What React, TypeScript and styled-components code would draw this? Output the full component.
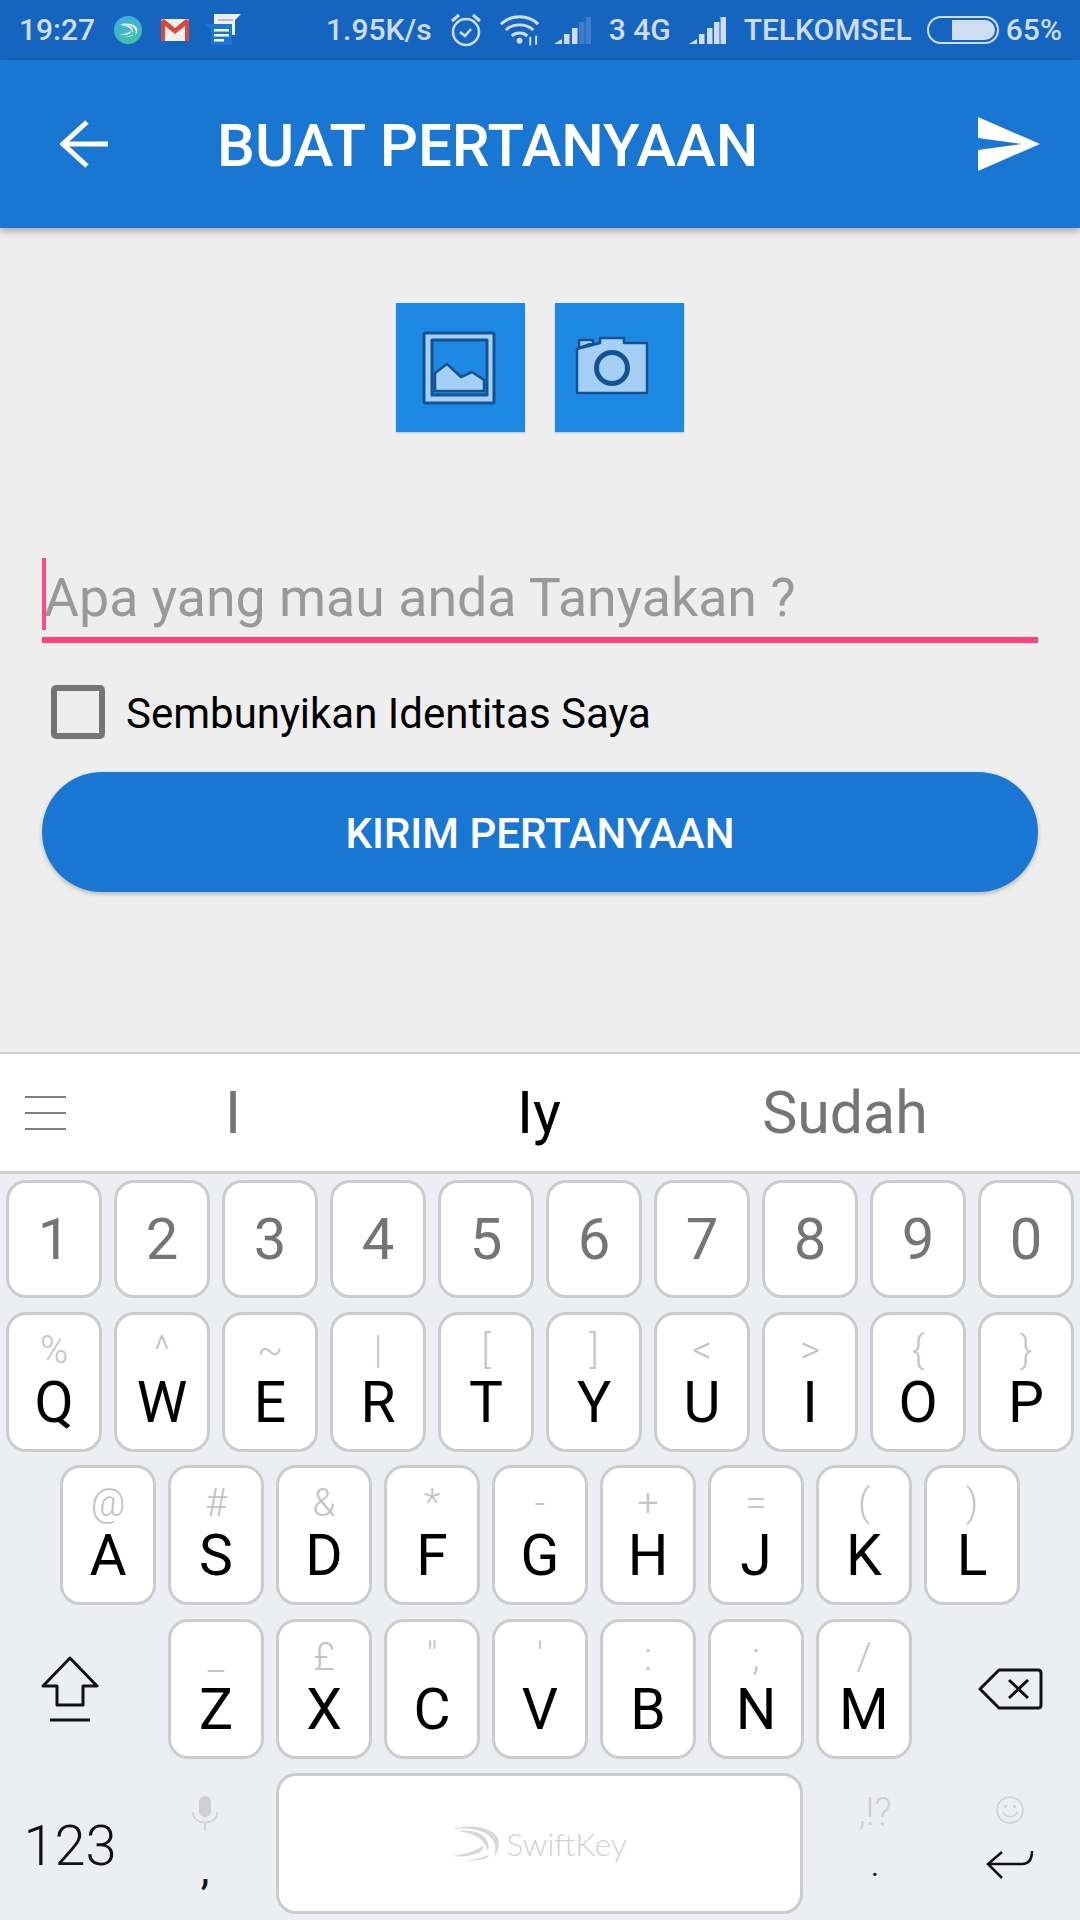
import React, { FC } from "react";
import styled, { createGlobalStyle } from "styled-components";

const Global = createGlobalStyle`
  html, body {
    margin: 0;
    padding: 0;
    background: #eeeeee;
  }
  * {
    box-sizing: border-box;
  }
`;

type KeyData = { main: string; sub?: string };

const digits = ["1", "2", "3", "4", "5", "6", "7", "8", "9", "0"];
const rowQ: KeyData[] = [
  { main: "Q", sub: "%" },
  { main: "W", sub: "^" },
  { main: "E", sub: "~" },
  { main: "R", sub: "|" },
  { main: "T", sub: "[" },
  { main: "Y", sub: "]" },
  { main: "U", sub: "<" },
  { main: "I", sub: ">" },
  { main: "O", sub: "{" },
  { main: "P", sub: "}" },
];
const rowA: KeyData[] = [
  { main: "A", sub: "@" },
  { main: "S", sub: "#" },
  { main: "D", sub: "&" },
  { main: "F", sub: "*" },
  { main: "G", sub: "-" },
  { main: "H", sub: "+" },
  { main: "J", sub: "=" },
  { main: "K", sub: "(" },
  { main: "L", sub: ")" },
];
const rowZ: KeyData[] = [
  { main: "Z", sub: "_" },
  { main: "X", sub: "£" },
  { main: "C", sub: '"' },
  { main: "V", sub: "'" },
  { main: "B", sub: ":" },
  { main: "N", sub: ";" },
  { main: "M", sub: "/" },
];

const SignalIcon: FC<{ dim?: boolean }> = ({ dim }) => (
  <svg width="37" height="27" viewBox="0 0 37 27">
    <path d="M0 27 L8 22 V27Z" fill="#cfdcf1" />
    <rect x="10" y="17" width="5.5" height="10" fill="#cfdcf1" />
    <rect x="18" y="11" width="5.5" height="16" fill="#cfdcf1" />
    <rect x="25" y="5" width="5.5" height="22" fill={dim ? "#3f7cc9" : "#cfdcf1"} />
    <rect x="31.5" y="0" width="5.5" height="27" fill={dim ? "#3f7cc9" : "#cfdcf1"} />
  </svg>
);

const SwiftKeyMark: FC<{ width: number; color: string }> = ({ width, color }) => (
  <svg width={width} height={(width * 105) / 145} viewBox="0 0 145 105" fill={color}>
    <path d="M0 12 C40 0 100 0 130 30 C145 45 140 75 125 95 C132 70 130 45 105 28 C80 12 40 8 0 12Z" />
    <path d="M15 18 C50 12 85 20 100 40 C110 55 110 70 105 76 C100 45 70 25 15 18Z" />
    <path d="M0 92 C30 88 65 80 95 60 C90 75 85 80 80 82 C55 92 25 95 0 92Z" />
    <path d="M35 105 C60 103 80 100 110 88 C105 97 100 100 95 100 C75 106 55 106 35 105Z" />
  </svg>
);

const App: FC = () => {
  return (
    <Screen>
      <Global />
      <StatusBar>
        <StatusGroup>
          <StatusItem>
            <StatusText>19:27</StatusText>
          </StatusItem>
          <StatusItem $gap={19}>
            <SwiftBadge>
              <SwiftKeyMark width={19} color="#ffffff" />
            </SwiftBadge>
          </StatusItem>
          <StatusItem $gap={19}>
            <svg width="28" height="22" viewBox="0 0 28 22">
              <rect width="28" height="22" rx="2" fill="#f1f1f1" />
              <path d="M0 2 L3 0 L14 9 L25 0 L28 2 V22 H24 V7 L14 15 L4 7 V22 H0Z" fill="#d9483b" />
            </svg>
          </StatusItem>
          <StatusItem $gap={16}>
            <svg width="36" height="32" viewBox="0 0 36 32">
              <path d="M9 0 H36 L30 6 V21 H9Z" fill="#eeeeee" />
              <rect x="13" y="5" width="15" height="2" fill="#bdbdbd" />
              <path d="M0 10 H27 V31 H6 V15Z" fill="#1976d2" />
              <rect x="9" y="15" width="15" height="2.5" fill="#ffffff" />
              <rect x="9" y="20" width="15" height="2.5" fill="#ffffff" />
              <rect x="9" y="25" width="10" height="2.5" fill="#ffffff" />
            </svg>
          </StatusItem>
        </StatusGroup>
        <StatusGroup>
          <StatusItem>
            <StatusText>1.95K/s</StatusText>
          </StatusItem>
          <StatusItem $gap={18}>
            <svg width="32" height="34" viewBox="0 0 32 34" fill="none" stroke="#cfdcf1" strokeWidth="2.5">
              <circle cx="16" cy="19" r="13" />
              <path d="M10 19 L15 23 L21 16" />
              <path d="M2 8 L9 2 M30 8 L23 2" strokeWidth="3" />
            </svg>
          </StatusItem>
          <StatusItem $gap={18}>
            <svg width="41" height="32" viewBox="0 0 42 32" fill="none" stroke="#cfdcf1" strokeWidth="3">
              <path d="M1 10 C11 0 29 0 39 10" />
              <path d="M6 16 C13 9 27 9 34 16" />
              <path d="M12 22 C16 18 24 18 28 22" />
              <circle cx="20" cy="27" r="3" fill="#cfdcf1" stroke="none" />
              <path d="M31 23 V32 M37 22 V31" strokeWidth="2" />
            </svg>
          </StatusItem>
          <StatusItem $gap={13}>
            <SignalIcon dim />
          </StatusItem>
          <StatusItem $gap={18}>
            <StatusText>3 4G</StatusText>
          </StatusItem>
          <StatusItem $gap={18}>
            <SignalIcon />
          </StatusItem>
          <StatusItem $gap={18}>
            <StatusText>TELKOMSEL</StatusText>
          </StatusItem>
          <StatusItem $gap={15}>
            <Battery>
              <BatteryFill />
            </Battery>
          </StatusItem>
          <StatusItem $gap={7}>
            <StatusText>65%</StatusText>
          </StatusItem>
        </StatusGroup>
      </StatusBar>

      <AppBar>
        <svg width="48" height="48" viewBox="0 0 48 48" fill="none" stroke="#ffffff" strokeWidth="5">
          <path d="M48 24 H3" />
          <path d="M27 2 L3 24 L27 46" />
        </svg>
        <Title>BUAT PERTANYAAN</Title>
        <svg width="62" height="54" viewBox="0 0 62 54">
          <path d="M0 0 L62 27 L0 54 V33 L44 27 L0 21Z" fill="#ffffff" />
        </svg>
      </AppBar>

      <Main>
        <TileRow>
          <Tile>
            <svg width="129" height="129" viewBox="0 0 129 129" stroke="#14538f" strokeWidth="3" strokeLinejoin="round">
              <rect x="28" y="30" width="70" height="70" rx="1.5" fill="#a6cff5" />
              <rect x="36" y="37" width="55" height="55" fill="#1e88e5" />
              <path d="M39 70 L51 61 L65 74 L76 69 L88 77 V88 H39Z" fill="#a6cff5" strokeWidth="2.5" />
            </svg>
          </Tile>
          <Tile>
            <svg width="129" height="129" viewBox="0 0 129 129" stroke="#14538f" strokeWidth="2.5" strokeLinejoin="round">
              <path d="M22 46 L45 40 V35 H69 V40 H92 V90 H22Z" fill="#a6cff5" />
              <path d="M24 37 H38 V40 L24 45Z" fill="#a6cff5" />
              <circle cx="57" cy="65" r="15.5" fill="#a6cff5" strokeWidth="5" />
            </svg>
          </Tile>
        </TileRow>

        <Field>
          <Caret />
          <Placeholder>Apa yang mau anda Tanyakan ?</Placeholder>
        </Field>

        <CheckRow>
          <CheckBox />
          <CheckLabel>Sembunyikan Identitas Saya</CheckLabel>
        </CheckRow>

        <SubmitButton>KIRIM PERTANYAAN</SubmitButton>
      </Main>

      <SuggestionBar>
        <MenuCell>
          <svg width="41" height="36" viewBox="0 0 41 36" stroke="#808080" strokeWidth="2">
            <path d="M0 2 H41 M0 18 H41 M0 34 H41" />
          </svg>
        </MenuCell>
        <Suggestion>I</Suggestion>
        <Suggestion $active>Iy</Suggestion>
        <Suggestion>Sudah</Suggestion>
      </SuggestionBar>

      <Keyboard>
        <KeyRow $height={118} $inset={6}>
          {digits.map((d) => (
            <Key key={d}>
              <DigitLabel>{d}</DigitLabel>
            </Key>
          ))}
        </KeyRow>

        <KeyRow $height={140} $inset={6}>
          {rowQ.map((k) => (
            <Key key={k.main}>
              <SubLabel>{k.sub}</SubLabel>
              <MainLabel>{k.main}</MainLabel>
            </Key>
          ))}
        </KeyRow>

        <KeyRow $height={140} $inset={60}>
          {rowA.map((k) => (
            <Key key={k.main}>
              <SubLabel>{k.sub}</SubLabel>
              <MainLabel>{k.main}</MainLabel>
            </Key>
          ))}
        </KeyRow>

        <KeyRow $height={140.5} $inset={0}>
          <ShiftCell>
            <svg width="58" height="66" viewBox="0 0 58 66" fill="none" stroke="#111111" strokeWidth="3" strokeLinejoin="round">
              <path d="M29 2 L56 30 H42 V49 H16 V30 H2Z" />
              <path d="M9 64 H49" />
            </svg>
          </ShiftCell>
          {rowZ.map((k) => (
            <Key key={k.main}>
              <SubLabel>{k.sub}</SubLabel>
              <MainLabel>{k.main}</MainLabel>
            </Key>
          ))}
          <BackspaceCell>
            <svg width="65" height="42" viewBox="0 0 65 42" fill="none" stroke="#111111" strokeWidth="3" strokeLinejoin="round">
              <path d="M2 21 L21 2 H60 Q63 2 63 5 V37 Q63 40 60 40 H21Z" />
              <path d="M31 12 L50 30 M50 12 L31 30" />
            </svg>
          </BackspaceCell>
        </KeyRow>

        <BottomRow>
          <NumbersCell>123</NumbersCell>
          <PunctCell $width={130}>
            <HintSlot>
              <svg width="28" height="36" viewBox="0 0 28 36" fill="none" stroke="#d0d0d0" strokeWidth="1.5">
                <rect x="8" y="0" width="12" height="21" rx="6" fill="#cfcfcf" stroke="none" />
                <path d="M1.5 16 C2 30 26 30 26.5 16" />
                <path d="M14 27 V35" />
              </svg>
            </HintSlot>
            <PunctMark $size={44} $lift={4}>,</PunctMark>
          </PunctCell>
          <SpaceKey>
            <SwiftKeyMark width={49} color="#d8d8d8" />
            <BrandText>SwiftKey</BrandText>
          </SpaceKey>
          <PunctCell $width={144}>
            <HintSlot>
              <HintText>,!?</HintText>
            </HintSlot>
            <PunctMark $size={30} $lift={7}>.</PunctMark>
          </PunctCell>
          <PunctCell $width={126}>
            <HintSlot>
              <svg width="28" height="28" viewBox="0 0 28 28" fill="none" stroke="#d0d0d0" strokeWidth="1.5">
                <circle cx="14" cy="14" r="13" />
                <circle cx="9.5" cy="10.5" r="1.5" fill="#d0d0d0" stroke="none" />
                <circle cx="18.5" cy="10.5" r="1.5" fill="#d0d0d0" stroke="none" />
                <path d="M7 16 C9 22 19 22 21 16" />
              </svg>
            </HintSlot>
            <EnterSlot>
              <svg width="48" height="28" viewBox="0 0 48 28" fill="none" stroke="#111111" strokeWidth="2.5">
                <path d="M16 1 L2 13 L16 27" />
                <path d="M2 13 H36 C42 13 46 9 46 0" />
              </svg>
            </EnterSlot>
          </PunctCell>
        </BottomRow>
      </Keyboard>
    </Screen>
  );
};

const Screen = styled.div`
  width: 1080px;
  height: 1920px;
  display: flex;
  flex-direction: column;
  overflow: hidden;
  background: #eeeeee;
  font-family: Roboto, "Liberation Sans", sans-serif;
`;

const StatusBar = styled.div`
  height: 60px;
  flex: none;
  display: flex;
  align-items: center;
  justify-content: space-between;
  padding: 0 18px 0 19px;
  background: #1565c0;
`;

const StatusGroup = styled.div`
  display: flex;
  align-items: center;
`;

const StatusItem = styled.div<{ $gap?: number }>`
  display: flex;
  align-items: center;
  margin-left: ${({ $gap }) => $gap ?? 0}px;
`;

const StatusText = styled.span`
  font-size: 30px;
  font-weight: 500;
  color: #cfdcf1;
  line-height: 60px;
`;

const SwiftBadge = styled.div`
  width: 28px;
  height: 28px;
  border-radius: 50%;
  display: flex;
  align-items: center;
  justify-content: center;
  background: linear-gradient(160deg, #3fa9e6, #43c59e);
`;

const Battery = styled.div`
  width: 72px;
  height: 28px;
  border: 2px solid #cfdcf1;
  border-radius: 14px;
  padding: 2px;
  display: flex;
  justify-content: flex-end;
`;

const BatteryFill = styled.div`
  width: 43px;
  height: 100%;
  background: #cfdcf1;
  border-radius: 0 10px 10px 0;
`;

const AppBar = styled.div`
  height: 168px;
  flex: none;
  display: flex;
  align-items: center;
  padding: 0 40px 0 60px;
  background: #1976d2;
  box-shadow: 0 3px 8px rgba(0, 0, 0, 0.3);
  position: relative;
`;

const Title = styled.h1`
  flex: 1;
  margin: 2px 0 0 109px;
  font-size: 60px;
  font-weight: 500;
  color: #ffffff;
`;

const Main = styled.main`
  flex: 1;
  display: flex;
  flex-direction: column;
  padding: 75px 42px 0;
`;

const TileRow = styled.div`
  display: flex;
  justify-content: center;
  gap: 30px;
`;

const Tile = styled.div`
  width: 129px;
  height: 129px;
  background: #1e88e5;
  box-shadow: 0 1px 2px rgba(0, 0, 0, 0.2);
`;

const Field = styled.div`
  position: relative;
  height: 85px;
  margin-top: 126px;
  border-bottom: 6px solid #ff4081;
  padding-left: 2px;
`;

const Caret = styled.div`
  position: absolute;
  left: 0;
  top: 0;
  width: 4px;
  height: 72px;
  background: #ff4081;
  opacity: 0.95;
`;

const Placeholder = styled.div`
  font-size: 53.7px;
  line-height: 79px;
  color: #999999;
`;

const CheckRow = styled.div`
  display: flex;
  align-items: center;
  height: 54px;
  margin-top: 42px;
  padding-left: 9px;
`;

const CheckBox = styled.div`
  width: 54px;
  height: 54px;
  border: 6px solid #757575;
  border-radius: 5px;
`;

const CheckLabel = styled.span`
  margin-left: 21px;
  padding-top: 2px;
  font-size: 42px;
  color: #000000;
`;

const SubmitButton = styled.button`
  height: 120px;
  margin-top: 33px;
  padding: 2px 0 0;
  border: none;
  border-radius: 60px;
  background: #1976d2;
  box-shadow: 0 2px 4px rgba(0, 0, 0, 0.25);
  color: #ffffff;
  font-family: inherit;
  font-size: 42px;
  font-weight: 500;
`;

const SuggestionBar = styled.div`
  height: 122px;
  flex: none;
  display: grid;
  grid-template-columns: 80px 306px 306px 306px;
  align-items: center;
  background: #ffffff;
  border-top: 2px solid #cfcfcf;
  border-bottom: 3px solid #cfcfcf;
`;

const MenuCell = styled.div`
  display: flex;
  padding-left: 25px;
`;

const Suggestion = styled.span<{ $active?: boolean }>`
  text-align: center;
  font-size: 59px;
  color: ${({ $active }) => ($active ? "#000000" : "#757575")};
`;

const Keyboard = styled.div`
  height: 746px;
  flex: none;
  display: flex;
  flex-direction: column;
  gap: 13.5px;
  padding-top: 6px;
  background: #eceef2;
`;

const KeyRow = styled.div<{ $height: number; $inset: number }>`
  height: ${({ $height }) => $height}px;
  flex: none;
  display: flex;
  gap: 12px;
  padding-left: ${({ $inset }) => $inset}px;
`;

const BottomRow = styled.div`
  height: 141px;
  flex: none;
  display: flex;
`;

const Key = styled.div`
  width: 96px;
  height: 100%;
  flex: none;
  display: flex;
  flex-direction: column;
  align-items: center;
  justify-content: center;
  background: #ffffff;
  border: 3px solid #cccccc;
  border-radius: 20px;
`;

const DigitLabel = styled.span`
  font-size: 58px;
  color: #757575;
`;

const SubLabel = styled.span`
  height: 44px;
  margin-top: -2px;
  font-size: 38px;
  line-height: 44px;
  font-weight: 300;
  color: #c4c4c4;
`;

const MainLabel = styled.span`
  font-size: 57px;
  line-height: 62px;
  color: #000000;
`;

const ShiftCell = styled.div`
  width: 156px;
  flex: none;
  display: flex;
  align-items: center;
  justify-content: center;
  padding-right: 16px;
`;

const BackspaceCell = styled.div`
  width: 156px;
  flex: none;
  display: flex;
  align-items: center;
  justify-content: center;
  padding-left: 16px;
`;

const NumbersCell = styled.div`
  width: 140px;
  flex: none;
  display: flex;
  align-items: center;
  justify-content: center;
  padding-top: 6px;
  font-size: 56px;
  font-weight: 300;
  color: #111111;
`;

const PunctCell = styled.div<{ $width: number }>`
  width: ${({ $width }) => $width}px;
  flex: none;
  display: flex;
  flex-direction: column;
  align-items: center;
`;

const HintSlot = styled.div`
  height: 72px;
  padding-top: 23px;
  display: flex;
  align-items: flex-start;
  justify-content: center;
`;

const HintText = styled.span`
  font-size: 38px;
  line-height: 32px;
  font-weight: 300;
  color: #cfcfcf;
`;

const PunctMark = styled.span<{ $size: number; $lift: number }>`
  margin-top: -${({ $lift }) => $lift}px;
  font-size: ${({ $size }) => $size}px;
  line-height: 56px;
  color: #111111;
`;

const EnterSlot = styled.div`
  padding-top: 6px;
`;

const SpaceKey = styled.div`
  width: 527px;
  margin-left: 6px;
  flex: none;
  display: flex;
  align-items: center;
  justify-content: center;
  gap: 5px;
  background: #ffffff;
  border: 3px solid #cccccc;
  border-radius: 20px;
`;

const BrandText = styled.span`
  font-family: Lato, "Open Sans", sans-serif;
  font-size: 32px;
  font-weight: 300;
  color: #d2d2d2;
`;

export default App;
